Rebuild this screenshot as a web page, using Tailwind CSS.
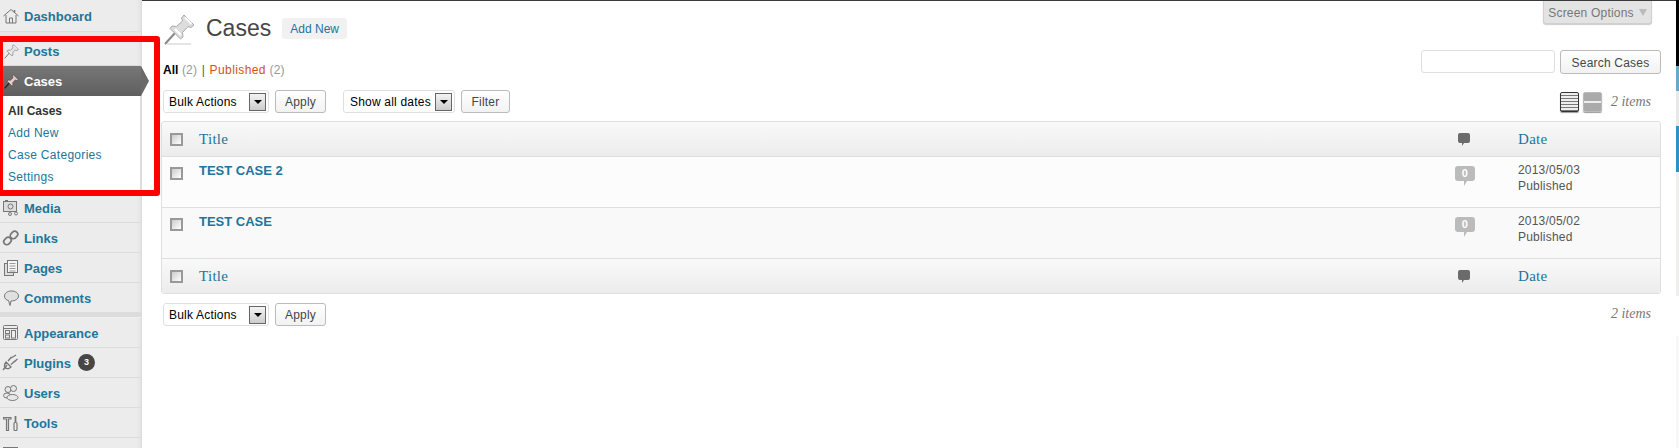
<!DOCTYPE html>
<html lang="en">
<head>
    <meta charset="UTF-8">
    <title>Cases</title>
    <script src="https://cdn.jsdelivr.net/npm/@tailwindcss/browser@4"></script>
</head>
<body class="bg-white font-['Liberation_Sans',Arial,sans-serif] overflow-hidden">
    <svg class="hidden">
        <symbol id="pin" viewBox="0 0 24 24">
            <path d="M1 23 L9 14" stroke="#777" stroke-width="1.6" fill="none"/>
            <path d="M15 1 L23 9 L20.5 10.5 L18 9.5 L14 14 L14.5 17.5 L12.5 19 L5 11.5 L6.5 9.5 L10 10 L14.5 6 L13.5 3.5 Z" fill="#e4e4e4" stroke="#888" stroke-width="1.2"/>
            <path d="M15.5 3 L21 8.5 M9 12 L12.5 15.5" stroke="#fff" stroke-width="1.2"/>
        </symbol>
        <symbol id="bubble" viewBox="0 0 12 13">
            <path d="M2 0 H10 Q12 0 12 2 V8 Q12 10 10 10 H6 L4 13 V10 H2 Q0 10 0 8 V2 Q0 0 2 0 Z" fill="#6b6b6b"/>
        </symbol>
        <symbol id="count" viewBox="0 0 20 20">
            <path d="M3 0 H17 Q20 0 20 3 V12 Q20 15 17 15 H12 L9 20 V15 H3 Q0 15 0 12 V3 Q0 0 3 0 Z" fill="#bbb"/>
        </symbol>
    </svg>

    <div class="relative flex w-[1679px] h-[448px] overflow-hidden">
        <!-- Admin menu -->
        <aside class="relative w-[142px] h-full shrink-0 bg-[#ececec] border-r border-[#ddd] flex flex-col text-[13px] font-bold text-[#21759b] shadow-[inset_-4px_0_4px_-3px_#ddd] [&_a]:pt-[2px]">
            <div class="h-[32px] shrink-0 flex items-center border-b border-[#dcdcdc]">
                <span class="w-[24px] shrink-0 pl-[3px]"><svg class="block w-[16px] h-[16px]" viewBox="0 0 16 16" fill="none" stroke="#777" stroke-width="1"><path d="M0.5 8 L8 1.5 L15.5 8 M3 7 V15 H13 V7 M6.5 15 V10 H9.5 V15"/><path d="M11.5 2 V4.5" stroke-width="1.5"/></svg></span>
                <a>Dashboard</a>
            </div>
            <div class="h-[4px] shrink-0 bg-[#e6e6e6]"></div>
            <div class="h-[30px] shrink-0 flex items-center border-b border-[#dcdcdc] pt-[1px]">
                <span class="w-[24px] shrink-0 pl-[4px]"><svg class="block w-[15px] h-[15px]"><use href="#pin"/></svg></span>
                <a>Posts</a>
            </div>
            <div class="relative h-[30px] shrink-0 flex items-center bg-gradient-to-b from-[#777] to-[#5f5f5f] text-white">
                <span class="w-[24px] shrink-0 pl-[4px]"><svg class="block w-[15px] h-[15px]" viewBox="0 0 24 24"><path d="M1 23 L9 14" stroke="#222" stroke-width="2"/><path d="M15 1 L23 9 L20.5 10.5 L18 9.5 L14 14 L14.5 17.5 L12.5 19 L5 11.5 L6.5 9.5 L10 10 L14.5 6 L13.5 3.5 Z" fill="#e8c8c8" stroke="#444" stroke-width="1"/></svg></span>
                <a>Cases</a>
                <span class="absolute left-[141px] top-0 border-y-[15px] border-l-[8px] border-y-transparent border-l-[#6a6a6a]"></span>
            </div>
            <div class="h-[97px] shrink-0 bg-white pl-[8px] pt-[2px] border-r border-[#ddd] flex flex-col text-[12px] font-normal tracking-[0.3px]">
                <a class="h-[22px] leading-[22px] font-bold text-[#333] tracking-normal">All Cases</a>
                <a class="h-[22px] leading-[22px]">Add New</a>
                <a class="h-[22px] leading-[22px]">Case Categories</a>
                <a class="h-[22px] leading-[22px]">Settings</a>
            </div>
            <div class="h-[30px] shrink-0 flex items-center border-b border-[#dcdcdc]">
                <span class="w-[24px] shrink-0 pl-[3px]"><svg class="block w-[16px] h-[16px]" viewBox="0 0 16 16" fill="none" stroke="#777"><rect x="0.5" y="1.5" width="13" height="10" fill="#ddd"/><path d="M2 0.5 H5"/><circle cx="7.5" cy="6.5" r="2.5"/><circle cx="7" cy="14" r="1.5"/><circle cx="13" cy="13.5" r="1.5"/></svg></span>
                <a>Media</a>
            </div>
            <div class="h-[30px] shrink-0 flex items-center border-b border-[#dcdcdc]">
                <span class="w-[24px] shrink-0 pl-[2px]"><svg class="block w-[18px] h-[18px]" viewBox="0 0 18 18" fill="none" stroke="#777" stroke-width="1.7"><rect x="1.5" y="9" width="8" height="6" rx="3" transform="rotate(-45 5.5 12)"/><rect x="8" y="3" width="8" height="6" rx="3" transform="rotate(-45 12 6)"/></svg></span>
                <a>Links</a>
            </div>
            <div class="h-[30px] shrink-0 flex items-center border-b border-[#dcdcdc]">
                <span class="w-[24px] shrink-0 pl-[4px]"><svg class="block w-[14px] h-[16px]" viewBox="0 0 14 16" stroke="#777"><rect x="0.5" y="3.5" width="9" height="12" fill="#ddd"/><rect x="3.5" y="0.5" width="10" height="12" fill="#f5f5f5"/><path d="M5.5 3.5 H11.5 M5.5 6 H11.5 M5.5 8.5 H11.5 M5.5 11 H11.5" stroke="#999"/></svg></span>
                <a>Pages</a>
            </div>
            <div class="h-[30px] shrink-0 flex items-center border-b border-[#dcdcdc]">
                <span class="w-[24px] shrink-0 pl-[4px]"><svg class="block w-[15px] h-[16px]" viewBox="0 0 15 16"><path d="M7.5 1 C12 1 14.5 3.5 14.5 6 C14.5 9 11 11 7 11 L6 15.5 L4.5 10.5 C2 10 0.5 8.5 0.5 6 C0.5 3.5 3 1 7.5 1 Z" fill="#e0e0e0" stroke="#777"/></svg></span>
                <a>Comments</a>
            </div>
            <div class="h-[5px] shrink-0 bg-[#dcdcdc] border-b border-[#f0f0f0]"></div>
            <div class="h-[30px] shrink-0 flex items-center border-b border-[#dcdcdc]">
                <span class="w-[24px] shrink-0 pl-[3px]"><svg class="block w-[15px] h-[15px]" viewBox="0 0 15 15" fill="none" stroke="#777"><rect x="0.5" y="0.5" width="14" height="14" rx="1" fill="#eee"/><path d="M0.5 3.5 H14.5"/><rect x="2.5" y="5.5" width="4" height="3"/><rect x="2.5" y="10" width="4" height="3"/><rect x="8.5" y="5.5" width="4" height="7.5"/></svg></span>
                <a>Appearance</a>
            </div>
            <div class="h-[30px] shrink-0 flex items-center border-b border-[#dcdcdc]">
                <span class="w-[24px] shrink-0 pl-[2px]"><svg class="block w-[16px] h-[17px]" viewBox="0 0 16 17" fill="none" stroke="#777" stroke-width="1.3"><path d="M1 16 L5 11"/><path d="M4 8 L9 13 L7 14.5 C5 15 3 14 2.5 12.5 C2.5 11 3 9 4 8 Z M6 7 L9.5 3 M9 10.5 L13 7"/><path d="M9 4 L14 1 M12 8 L15.5 5"/></svg></span>
                <a>Plugins</a>
                <span class="ml-[7px] w-[17px] h-[17px] rounded-full bg-[#464646] text-white text-[9px] flex items-center justify-center">3</span>
            </div>
            <div class="h-[30px] shrink-0 flex items-center border-b border-[#dcdcdc]">
                <span class="w-[24px] shrink-0 pl-[3px]"><svg class="block w-[16px] h-[16px]" viewBox="0 0 16 16" fill="#e8e8e8" stroke="#777"><circle cx="5" cy="4.5" r="3"/><circle cx="10.5" cy="3.5" r="3"/><ellipse cx="4" cy="10.5" rx="3.5" ry="2.5"/><ellipse cx="9.5" cy="12.5" rx="5.5" ry="3"/></svg></span>
                <a>Users</a>
            </div>
            <div class="h-[30px] shrink-0 flex items-center border-b border-[#dcdcdc]">
                <span class="w-[24px] shrink-0 pl-[3px]"><svg class="block w-[16px] h-[16px]" viewBox="0 0 16 16" fill="none" stroke="#777" stroke-width="1.2"><path d="M0.5 2.5 H8 V4 H5.5 V15.5 H3.5 V4 H0.5 Z" fill="#ddd"/><path d="M12.5 1 V7" stroke-width="1.8"/><rect x="11" y="7.5" width="3" height="8" rx="1" fill="#eee"/></svg></span>
                <a>Tools</a>
            </div>
            <div class="shrink-0 pl-[3px] pt-[9px]">
                <svg class="block w-[16px] h-[12px]" viewBox="0 0 16 12" fill="none" stroke="#777"><rect x="0.5" y="0.5" width="14" height="14"/></svg>
            </div>
        </aside>

        <!-- Content -->
        <main class="relative flex-1 min-w-0 border-t border-[#3a3a3a] pl-[19px] pr-[15px] text-[12px] tracking-[0.2px] text-[#555]">
            <div class="absolute right-[24px] top-0 w-[109px] h-[23px] pt-[1px] bg-[#e3e3e3] border border-t-0 border-[#d0d0d0] rounded-b-[3px] flex items-center justify-center gap-[5px] text-[#777] shadow-[0_1px_1px_#ccc]">
                <span>Screen Options</span>
                <span class="border-x-[4px] border-t-[7px] border-x-transparent border-t-[#bbb]"></span>
            </div>

            <div class="h-[49px] flex items-start">
                <svg class="w-[31px] h-[31px] ml-[3px] mt-[13px] shrink-0" viewBox="0 0 31 31">
                    <path d="M1 30 L11 19" stroke="#888" stroke-width="2"/>
                    <path d="M20 1 L30 11 L27 13.5 L24 12.5 L18.5 18.5 L19 23 L16.5 25 L6 14.5 L8 12 L12.5 12.5 L18.5 7 L17.5 4 Z" fill="#ddd" stroke="#aaa"/>
                    <path d="M21 3.5 L27.5 10 M11 15 L17 21" stroke="#fff" stroke-width="2"/>
                    <rect x="3" y="29.5" width="24" height="1" fill="#ccc"/>
                </svg>
                <h1 class="ml-[11px] mt-[14px] text-[23px] leading-[26px] tracking-normal text-[#464646]">Cases</h1>
                <a class="ml-[11px] mt-[17px] w-[65px] h-[21px] pt-[1px] rounded-[3px] bg-[#f1f1f1] text-[#21759b] tracking-normal flex items-center justify-center">Add New</a>
            </div>

            <div class="h-[40px] flex justify-between items-start pl-[2px]">
                <div class="mt-[13px] leading-[15px]">
                    <a class="font-bold text-black tracking-normal">All</a> <span class="text-[#999]">(2)</span> <span class="text-[#555] mx-[1px]">|</span> <a class="text-[#d54e21] tracking-[0.4px]">Published</a> <span class="text-[#999]">(2)</span>
                </div>
                <div class="flex gap-[5px]">
                    <div class="w-[134px] h-[23px] border border-[#dfdfdf] rounded-[3px]"></div>
                    <button class="w-[101px] h-[24px] pt-[1px] border border-[#bbb] rounded-[3px] bg-gradient-to-b from-white to-[#f2f2f2] text-[#464646]">Search Cases</button>
                </div>
            </div>

            <div class="h-[31px] flex items-start pl-[2px]">
                <div class="w-[106px] h-[23px] border border-[#dfdfdf] rounded-[3px] flex items-center justify-between pl-[5px] pr-[2px] text-black">
                    <span class="pt-[1px]">Bulk Actions</span>
                    <span class="w-[17px] h-[18px] border border-[#666] bg-gradient-to-b from-[#f4f4f4] to-[#ccc] flex items-center justify-center"><span class="border-x-[4px] border-t-[4px] border-x-transparent border-t-black"></span></span>
                </div>
                <button class="ml-[6px] w-[51px] h-[23px] pt-[1px] border border-[#bbb] rounded-[3px] bg-gradient-to-b from-white to-[#f2f2f2] text-[#464646]">Apply</button>
                <div class="ml-[17px] w-[112px] h-[23px] border border-[#dfdfdf] rounded-[3px] flex items-center justify-between pl-[6px] pr-[2px] text-black">
                    <span class="pt-[1px]">Show all dates</span>
                    <span class="w-[17px] h-[18px] border border-[#666] bg-gradient-to-b from-[#f4f4f4] to-[#ccc] flex items-center justify-center"><span class="border-x-[4px] border-t-[4px] border-x-transparent border-t-black"></span></span>
                </div>
                <button class="ml-[6px] w-[49px] h-[23px] pt-[1px] border border-[#bbb] rounded-[3px] bg-gradient-to-b from-white to-[#f2f2f2] text-[#464646]">Filter</button>
                <div class="ml-auto flex items-center h-[21px] mt-[1px]">
                    <span class="w-[19px] h-[20px] rounded-[2px] border border-[#333] bg-[repeating-linear-gradient(#eee_0,#eee_2px,#777_2px,#777_3px)] shadow-[0_1px_1px_#999]"></span>
                    <span class="ml-[4px] w-[19px] h-[20px] rounded-[2px] border border-[#bbb] bg-[linear-gradient(#aaa_0,#aaa_42%,#eee_42%,#eee_58%,#aaa_58%)] shadow-[0_1px_1px_#999]"></span>
                    <em class="ml-[9px] mr-[10px] font-['Liberation_Serif',serif] text-[14px] tracking-normal text-[#777]">2 items</em>
                </div>
            </div>

            <!-- List table -->
            <div class="border border-[#dfdfdf] rounded-[3px] bg-[#fcfcfc]">
                <div class="h-[35px] flex items-center bg-gradient-to-b from-[#f9f9f9] to-[#ececec] border-b border-[#dfdfdf] rounded-t-[3px]">
                    <span class="ml-[8px] w-[13px] h-[13px] border-2 border-[#999] bg-gradient-to-br from-[#ccc] to-white"></span>
                    <a class="ml-[16px] flex-1 font-['Liberation_Serif',serif] text-[15px] tracking-[0.3px] text-[#21759b]">Title</a>
                    <svg class="w-[12px] h-[13px] mr-[48px]"><use href="#bubble"/></svg>
                    <a class="w-[142px] font-['Liberation_Serif',serif] text-[15px] tracking-[0.3px] text-[#21759b]">Date</a>
                </div>
                <div class="h-[51px] flex items-start border-b border-[#dfdfdf]">
                    <span class="ml-[8px] mt-[10px] w-[13px] h-[13px] border-2 border-[#999] bg-gradient-to-br from-[#ccc] to-white"></span>
                    <a class="ml-[16px] mt-[4px] flex-1 font-bold text-[13px] tracking-normal text-[#21759b]">TEST CASE 2</a>
                    <span class="relative mt-[9px] mr-[43px] w-[20px] h-[20px] flex justify-center">
                        <svg class="absolute inset-0 w-[20px] h-[20px]"><use href="#count"/></svg>
                        <span class="relative text-white font-bold text-[11px] leading-[15px]">0</span>
                    </span>
                    <div class="w-[142px] mt-[5px] leading-[16px]">2013/05/03<br>Published</div>
                </div>
                <div class="h-[51px] flex items-start border-b border-[#dfdfdf] bg-[#f9f9f9]">
                    <span class="ml-[8px] mt-[10px] w-[13px] h-[13px] border-2 border-[#999] bg-gradient-to-br from-[#ccc] to-white"></span>
                    <a class="ml-[16px] mt-[4px] flex-1 font-bold text-[13px] tracking-normal text-[#21759b]">TEST CASE</a>
                    <span class="relative mt-[9px] mr-[43px] w-[20px] h-[20px] flex justify-center">
                        <svg class="absolute inset-0 w-[20px] h-[20px]"><use href="#count"/></svg>
                        <span class="relative text-white font-bold text-[11px] leading-[15px]">0</span>
                    </span>
                    <div class="w-[142px] mt-[5px] leading-[16px]">2013/05/02<br>Published</div>
                </div>
                <div class="h-[34px] flex items-center bg-gradient-to-b from-[#f9f9f9] to-[#ececec] rounded-b-[3px]">
                    <span class="ml-[8px] w-[13px] h-[13px] border-2 border-[#999] bg-gradient-to-br from-[#ccc] to-white"></span>
                    <a class="ml-[16px] flex-1 font-['Liberation_Serif',serif] text-[15px] tracking-[0.3px] text-[#21759b]">Title</a>
                    <svg class="w-[12px] h-[13px] mr-[48px]"><use href="#bubble"/></svg>
                    <a class="w-[142px] font-['Liberation_Serif',serif] text-[15px] tracking-[0.3px] text-[#21759b]">Date</a>
                </div>
            </div>

            <div class="mt-[9px] h-[23px] flex items-start pl-[2px]">
                <div class="w-[106px] h-[23px] border border-[#dfdfdf] rounded-[3px] flex items-center justify-between pl-[5px] pr-[2px] text-black">
                    <span class="pt-[1px]">Bulk Actions</span>
                    <span class="w-[17px] h-[18px] border border-[#666] bg-gradient-to-b from-[#f4f4f4] to-[#ccc] flex items-center justify-center"><span class="border-x-[4px] border-t-[4px] border-x-transparent border-t-black"></span></span>
                </div>
                <button class="ml-[6px] w-[51px] h-[23px] pt-[1px] border border-[#bbb] rounded-[3px] bg-gradient-to-b from-white to-[#f2f2f2] text-[#464646]">Apply</button>
                <em class="ml-auto mr-[10px] font-['Liberation_Serif',serif] text-[14px] tracking-normal text-[#777]">2 items</em>
            </div>
        </main>

        <!-- Sliver of the window behind -->
        <div class="w-[3px] shrink-0 flex flex-col">
            <div class="h-[66px] bg-black"></div>
            <div class="h-[25px] bg-[#6aaac8]"></div>
            <div class="h-[35px] bg-[#e8e8e8]"></div>
            <div class="h-[46px] bg-[#2a95c5]"></div>
            <div class="h-[124px] bg-[#eeeeea]"></div>
            <div class="h-[40px] bg-white"></div>
            <div class="flex-1 bg-[#f7f7f7]"></div>
        </div>

        <!-- Red annotation over the menu -->
        <div class="absolute left-[-3px] top-[36px] w-[163px] h-[160px] border-[6px] border-[#ff0000] rounded-[3px] pointer-events-none"></div>
    </div>
</body>
</html>
